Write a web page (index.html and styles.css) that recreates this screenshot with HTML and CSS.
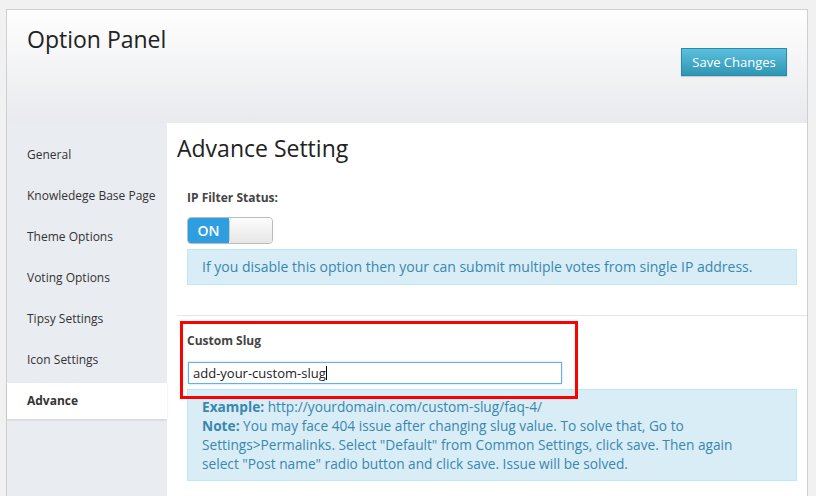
FILE: index.html
```html
<!DOCTYPE html>
<html>
<head>
<meta charset="utf-8">
<link rel="stylesheet" href="styles.css">
</head>
<body>
<div class="panel">
  <div class="header">
    <h1 class="title">Option Panel</h1>
    <button class="save">Save Changes</button>
  </div>
  <div class="body">
    <ul class="sidebar">
      <li>General</li>
      <li>Knowledege Base Page</li>
      <li>Theme Options</li>
      <li>Voting Options</li>
      <li>Tipsy Settings</li>
      <li>Icon Settings</li>
      <li class="active">Advance</li>
    </ul>
    <div class="content">
      <h2 class="heading">Advance Setting</h2>
      <div class="section first">
        <div class="label">IP Filter Status:</div>
        <div class="toggle"><span class="on">ON</span><span class="knob"></span></div>
        <div class="info">If you disable this option then your can submit multiple votes from single IP address.</div>
      </div>
      <div class="section second">
        <div class="label">Custom Slug</div>
        <div class="input">add-your-custom-slug<span class="caret"></span></div>
        <div class="info multi">
          <p class="line"><b>Example:</b> http://yourdomain.com/custom-slug/faq-4/</p>
          <p class="line"><b>Note:</b> You may face 404 issue after changing slug value. To solve that, Go to</p>
          <p class="line">Settings&gt;Permalinks. Select "Default" from Common Settings, click save. Then again</p>
          <p class="line">select "Post name" radio button and click save. Issue will be solved.</p>
        </div>
        <div class="highlight"></div>
      </div>
    </div>
  </div>
</div>
</body>
</html>
```
FILE: styles.css
```css
html, body { margin: 0; padding: 0; }
body {
  background: #f1f1f1;
  font-family: "Open Sans", "Noto Sans", sans-serif;
  color: #333;
  width: 816px;
  height: 496px;
  overflow: hidden;
}
.panel {
  margin: 9px 0 0 6px;
  width: 800px;
  border: 1px solid #cfcfcf;
  border-bottom: none;
  height: 600px;
  background: #fff;
}
.header {
  height: 113px;
  background: linear-gradient(#fefefe, #e9eaee);
  display: flex;
  justify-content: space-between;
  align-items: flex-start;
  box-sizing: border-box;
  padding: 0 20px 0 20px;
}
.title {
  margin: 12px 0 0 0;
  font-weight: 400;
  font-size: 23px;
  line-height: 34px;
  color: #222;
}
.save {
  margin-top: 38px;
  width: 106px;
  height: 28px;
  border: 1px solid #2a8aad;
  background: linear-gradient(#5bc0de, #2f96b4);
  color: #fff;
  font-family: "Open Sans", sans-serif;
  font-size: 13px;
  padding: 0;
  border-radius: 0;
  box-shadow: 0 1px 1px rgba(0,0,0,0.15);
}
.body { display: flex; }
.sidebar {
  list-style: none;
  margin: 0;
  padding: 14px 0 0 0;
  width: 160px;
  background: #e9ecf1;
  height: 480px;
}
.sidebar li {
  height: 36px;
  line-height: 36px;
  margin-bottom: 5px;
  padding-left: 20px;
  font-size: 12px;
  color: #333;
}
.sidebar li.active {
  background: #fff;
  font-weight: 700;
  box-shadow: 0 1px 2px rgba(0,0,0,0.12);
}
.content {
  flex: 1;
  padding: 8px 0 0 10px;
}
.heading {
  margin: 0;
  font-weight: 400;
  font-size: 23px;
  line-height: 34px;
  color: #222;
}
.section {
  padding: 0 10px 0 10px;
  position: relative;
}
.section.first {
  padding-top: 24px;
  padding-bottom: 30px;
  border-bottom: 1px solid #e5e5e5;
}
.section.second { padding-top: 16px; }
.label {
  font-size: 12px;
  font-weight: 700;
  color: #444;
  line-height: 18px;
}
.toggle {
  margin-top: 10px;
  width: 84px;
  height: 25px;
  border: 1px solid #bbb;
  border-radius: 4px;
  display: flex;
  overflow: hidden;
}
.toggle .on {
  width: 41px;
  background: #2d9ee0;
  color: #fff;
  font-size: 14px;
  font-weight: 600;
  line-height: 25px;
  text-align: center;
}
.toggle .knob {
  flex: 1;
  background: linear-gradient(#fdfdfd, #e6e6e6);
  border-left: 1px solid #ccc;
  border-radius: 4px;
}
.info {
  margin-top: 5px;
  background: #d9edf7;
  border: 1px solid #bce8f1;
  color: #3a87ad;
  font-size: 14px;
  line-height: 34px;
  padding: 0 14px;
}
.info.multi {
  margin-top: 5px;
  line-height: 19px;
  padding: 7px 14px 7px 14px;
  font-size: 13.7px;
}
.line { margin: 0; white-space: nowrap; }
.input {
  margin-top: 12px;
  margin-left: 1px;
  width: 368px;
  height: 20px;
  border: 1px solid #66afe9;
  box-shadow: 0 0 2px rgba(102,175,233,0.5);
  font-size: 13px;
  line-height: 20px;
  padding-left: 4px;
  color: #222;
}
.caret {
  display: inline-block;
  width: 1px;
  height: 14px;
  background: #000;
  vertical-align: -2px;
}
.highlight {
  position: absolute;
  left: 3px;
  top: 5px;
  width: 392px;
  height: 72px;
  border: 3px solid #f00;
}
```
